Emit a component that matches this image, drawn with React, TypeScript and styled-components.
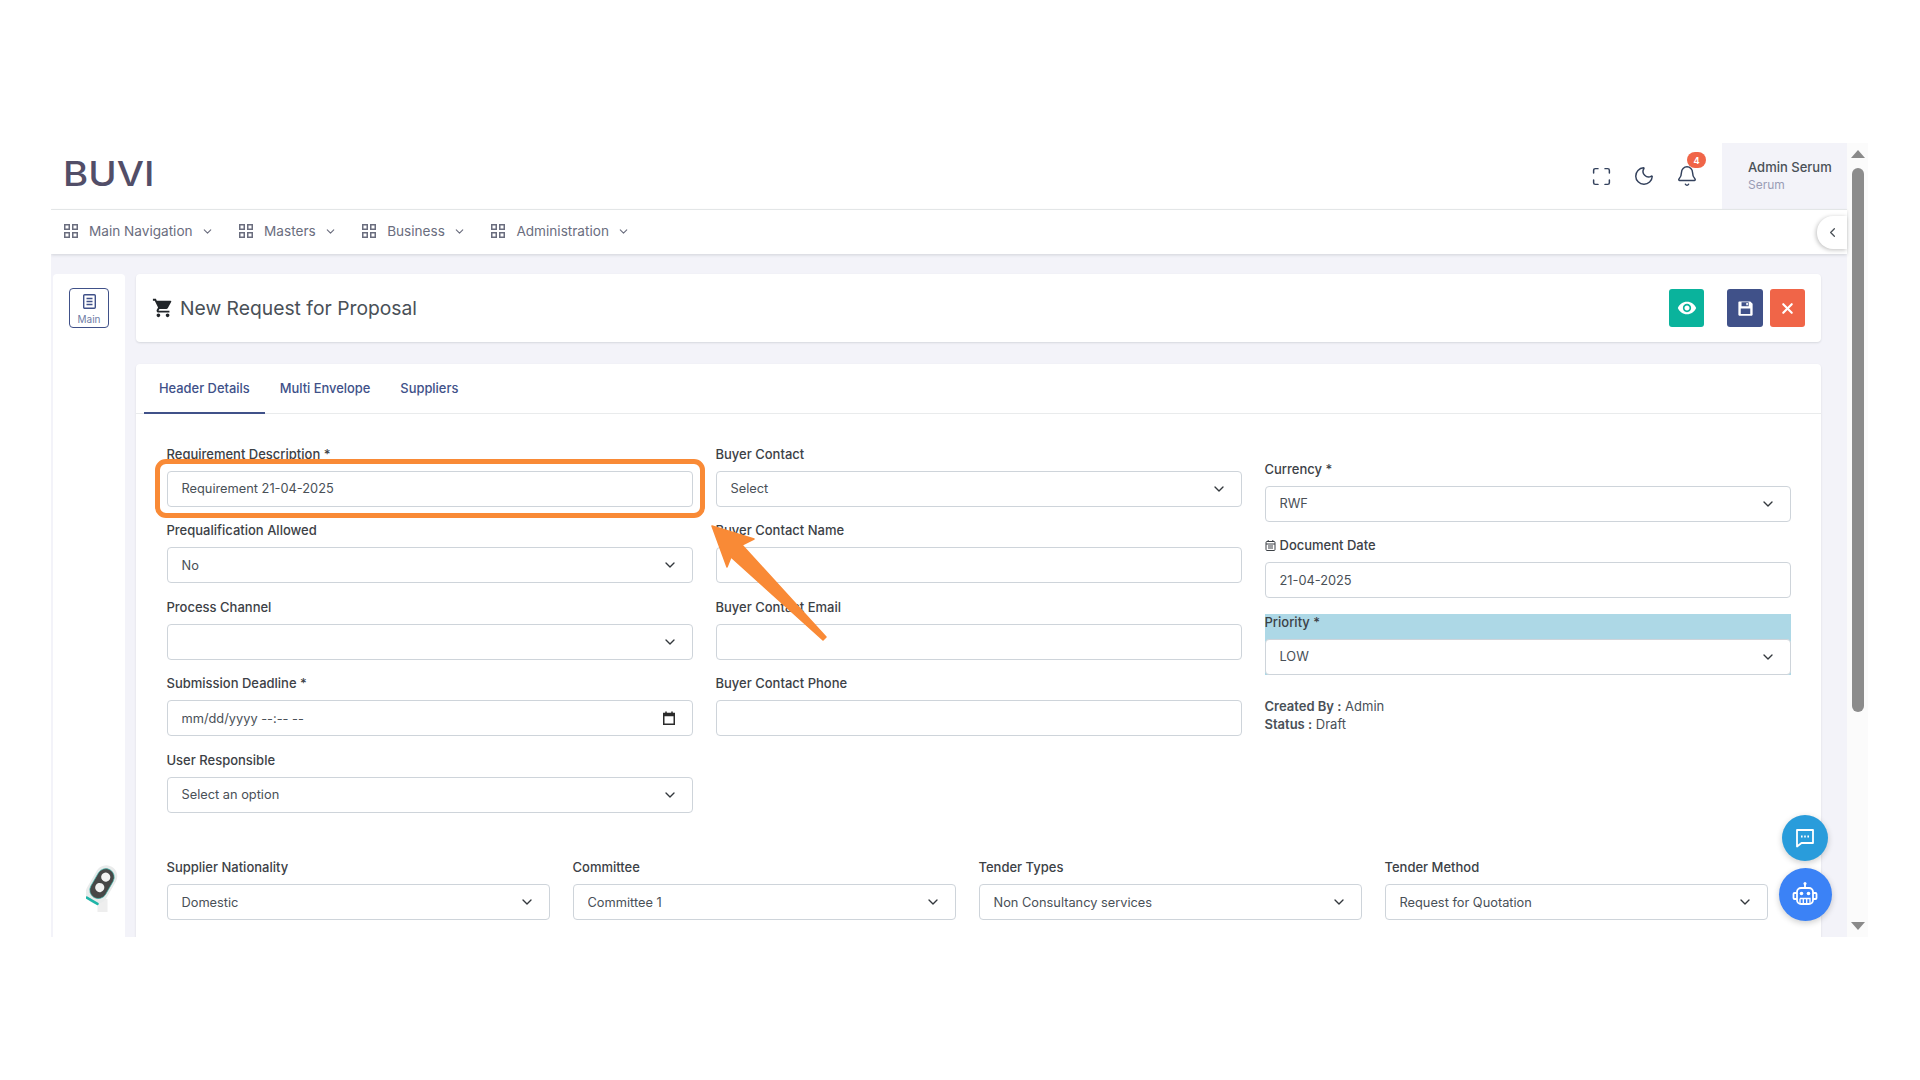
import React from 'react'
import styled, { createGlobalStyle } from 'styled-components'
import { Bell, ChevronDown, ChevronLeft, Maximize, Moon, X } from 'lucide-react'
import { MdShoppingCart, MdVisibility } from 'react-icons/md'
import { RiSave3Fill } from 'react-icons/ri'

const GlobalStyle = createGlobalStyle`
  html, body {
    margin: 0;
    background: #fff;
    font-family: Inter, "Noto Sans", sans-serif;
    color: #495057;
  }
  * { box-sizing: border-box; }
`

const Stage = styled.div`
  width: 1920px;
  height: 1080px;
  padding: 143px 52px 143px 51px;
  overflow: hidden;
`

const Frame = styled.div`
  position: relative;
  display: flex;
  width: 1817px;
  height: 794px;
  overflow: hidden;
`

const MainColumn = styled.div`
  flex: 1;
  min-width: 0;
  display: flex;
  flex-direction: column;
  background: #f3f3f9;
`

const Header = styled.header`
  height: 67px;
  flex: none;
  display: flex;
  align-items: center;
  background: #fff;
  border-bottom: 1px solid #e9ebec;
  padding-left: 12px;
`

const Logo = styled.div`
  font-size: 34px;
  font-weight: 500;
  color: #524e68;
  line-height: 1;
  margin-top: -4px;
  transform: scaleX(1.13);
  transform-origin: left center;
`

const HeaderIcons = styled.div`
  margin-left: auto;
  display: flex;
  align-items: center;
  gap: 21px;
  padding-right: 24px;
  color: #33415c;
`

const BellWrap = styled.div`
  position: relative;
  display: flex;
`

const Badge = styled.span`
  position: absolute;
  top: -13px;
  left: 11px;
  width: 19px;
  height: 16px;
  border-radius: 8px;
  background: #f06548;
  color: #fff;
  font-size: 9px;
  font-weight: 700;
  display: flex;
  align-items: center;
  justify-content: center;
`

const Profile = styled.div`
  width: 125px;
  height: 100%;
  background: #f3f3f9;
  padding: 15px 0 0 26px;
`

const ProfileName = styled.div`
  font-size: 13px;
  font-weight: 500;
  line-height: 18px;
  color: #495057;
  white-space: nowrap;
`

const ProfileRole = styled.div`
  font-size: 12px;
  line-height: 18px;
  color: #9a9db5;
`

const NavBar = styled.nav`
  position: relative;
  height: 44px;
  flex: none;
  display: flex;
  align-items: center;
  gap: 25.5px;
  padding: 0 0 2px 13px;
  background: #fff;
  box-shadow: 0 1px 3px rgba(56, 65, 74, 0.18);
`

const NavItem = styled.div`
  display: flex;
  align-items: center;
  color: #6a6d7e;
  font-size: 13.6px;
  white-space: nowrap;

  span {
    margin: 0 8px 0 11px;
  }
`

const CollapseTab = styled.div`
  position: absolute;
  top: 6px;
  right: 0;
  width: 30px;
  height: 33px;
  background: #fff;
  border-radius: 16px 0 0 16px;
  box-shadow: -1px 1px 4px rgba(0, 0, 0, 0.25);
  display: flex;
  align-items: center;
  justify-content: center;
  color: #495057;
`

const Body = styled.div`
  flex: 1;
  min-height: 0;
  display: flex;
  gap: 11px;
  padding: 20px 26px 0 2px;
  overflow: hidden;
`

const Sidebar = styled.aside`
  width: 72px;
  flex: none;
  background: #fff;
  border-radius: 4px 4px 0 0;
  display: flex;
  flex-direction: column;
  align-items: center;
  padding: 14px 0 25px;
`

const SideButton = styled.div`
  width: 40px;
  height: 40px;
  border: 1px solid #405189;
  border-radius: 4px;
  color: #6f7ca6;
  display: flex;
  flex-direction: column;
  align-items: center;
  padding-top: 5px;
  font-size: 10px;
  line-height: 12px;
  gap: 4px;

  svg {
    color: #405189;
  }
`

const Keyfob = styled.svg`
  margin-top: auto;
  align-self: flex-start;
  margin-left: 33px;
`

const Content = styled.main`
  flex: 1;
  min-width: 0;
`

const TitleCard = styled.section`
  height: 68px;
  display: flex;
  align-items: center;
  padding: 0 16px;
  margin-bottom: 22px;
  background: #fff;
  border-radius: 4px;
  box-shadow: 0 1px 2px rgba(56, 65, 74, 0.15);
`

const Title = styled.h1`
  margin: 0 0 0 6px;
  font-size: 19.3px;
  font-weight: 400;
  color: #495057;
`

const Actions = styled.div`
  margin-left: auto;
  display: flex;
`

const ActionButton = styled.div<{ $bg: string; $gap?: number; $width?: number }>`
  width: ${p => p.$width ?? 35}px;
  height: 38px;
  margin-left: ${p => p.$gap ?? 0}px;
  border-radius: 3px;
  background: ${p => p.$bg};
  color: #fff;
  display: flex;
  align-items: center;
  justify-content: center;
`

const FormCard = styled.section`
  background: #fff;
  border-radius: 4px;
  box-shadow: 0 1px 2px rgba(56, 65, 74, 0.15);
`

const Tabs = styled.div`
  height: 50px;
  padding-left: 8px;
  display: flex;
  border-bottom: 1px solid #e9ebec;
`

const Tab = styled.div<{ $active?: boolean }>`
  height: 50px;
  padding: 0 15px;
  display: flex;
  align-items: center;
  font-size: 12.9px;
  font-weight: 500;
  color: #405189;
  border-bottom: 2px solid ${p => (p.$active ? '#405189' : 'transparent')};
`

const FormBody = styled.div`
  padding: 31.5px 0 40px 30.5px;
`

const TopGrid = styled.div`
  display: grid;
  grid-template-columns: 526.5px 526.5px 526px;
  column-gap: 22.5px;
`

const Column = styled.div<{ $offset?: number }>`
  padding-top: ${p => p.$offset ?? 0}px;
`

const Field = styled.div<{ $bg?: string }>`
  margin-bottom: 15.5px;
  background: ${p => p.$bg ?? 'transparent'};
`

const Label = styled.label`
  display: flex;
  align-items: center;
  gap: 4px;
  height: 16px;
  margin-bottom: 9px;
  font-size: 13px;
  font-weight: 500;
  line-height: 16px;
  color: #3c4146;
  white-space: nowrap;
`

const Input = styled.input`
  display: block;
  width: 100%;
  height: 36px;
  padding: 0 14px;
  border: 1px solid #ced4da;
  border-radius: 4px;
  background: #fff;
  font-family: inherit;
  font-size: 12.8px;
  color: #495057;
  outline: none;
`

const ControlWrap = styled.div`
  position: relative;
  color: #33383d;

  svg {
    position: absolute;
    top: 10px;
    right: 15px;
    pointer-events: none;
  }
`

const Select = styled.select`
  display: block;
  width: 100%;
  height: 36px;
  padding: 0 14px;
  appearance: none;
  border: 1px solid #ced4da;
  border-radius: 4px;
  background: #fff;
  font-family: inherit;
  font-size: 12.8px;
  color: #495057;
  outline: none;
`

const Meta = styled.div`
  margin-top: 22px;
  font-size: 13px;
  line-height: 18px;
  color: #495057;

  b {
    font-weight: 600;
  }
`

const BottomRow = styled.div`
  margin-top: 31px;
  display: grid;
  grid-template-columns: repeat(4, 383px);
  column-gap: 23px;
`

const ScrollTrack = styled.div`
  width: 21px;
  flex: none;
  display: flex;
  flex-direction: column;
  align-items: center;
  padding: 7px 0;
  background: #fbfbfb;
`

const ArrowUp = styled.div`
  width: 0;
  height: 0;
  border-left: 7px solid transparent;
  border-right: 7px solid transparent;
  border-bottom: 8px solid #8a8a8a;
`

const ArrowDown = styled.div`
  margin-top: auto;
  width: 0;
  height: 0;
  border-left: 7px solid transparent;
  border-right: 7px solid transparent;
  border-top: 8px solid #8a8a8a;
`

const Thumb = styled.div`
  margin-top: 10px;
  width: 12px;
  height: 544px;
  border-radius: 6px;
  background: #8c8c8c;
`

const Fab = styled.div<{ $size: number; $bg: string; $top: number }>`
  position: absolute;
  top: ${p => p.$top}px;
  left: ${p => 1754 - p.$size / 2}px;
  width: ${p => p.$size}px;
  height: ${p => p.$size}px;
  border-radius: 50%;
  background: ${p => p.$bg};
  color: #fff;
  display: flex;
  align-items: center;
  justify-content: center;
  box-shadow: 0 2px 6px rgba(0, 0, 0, 0.2);
`

const Highlight = styled.div`
  position: absolute;
  left: 104px;
  top: 316px;
  width: 550px;
  height: 59px;
  border: 5px solid #f98a36;
  border-radius: 11px;
  pointer-events: none;
`

const ArrowOverlay = styled.svg`
  position: absolute;
  left: 650px;
  top: 375px;
  pointer-events: none;
`

const frameLeft = 650 + 51
const frameTop = 375 + 143
const arrowPoints = [
  [712, 526],
  [754, 539],
  [742, 545],
  [826, 637],
  [823, 640],
  [731, 557],
  [727, 567],
]
  .map(([x, y]) => `${x - frameLeft},${y - frameTop}`)
  .join(' ')

const navItems = ['Main Navigation', 'Masters', 'Business', 'Administration']

const GridIcon = () => (
  <svg width="14" height="14" viewBox="0 0 14 14" fill="none" stroke="currentColor" strokeWidth="1.5">
    <rect x="0.75" y="0.75" width="4.5" height="4.5" />
    <rect x="8.75" y="0.75" width="4.5" height="4.5" />
    <rect x="0.75" y="8.75" width="4.5" height="4.5" />
    <rect x="8.75" y="8.75" width="4.5" height="4.5" />
  </svg>
)

const DocIcon = () => (
  <svg width="15" height="15" viewBox="0 0 15 15" fill="none" stroke="currentColor" strokeWidth="1.4">
    <rect x="1.7" y="0.7" width="11.6" height="13.6" rx="1" />
    <path d="M4.5 4.5h6M4.5 7.5h6M4.5 10.5h6" />
  </svg>
)

const SmallCalendar = () => (
  <svg width="11" height="11" viewBox="0 0 11 11" fill="none" stroke="currentColor" strokeWidth="1">
    <rect x="1" y="1.5" width="9" height="9" rx="1" />
    <path d="M1 4h9M3 6h5M3 8h5" />
    <path d="M3.2 0v2M7.8 0v2" />
  </svg>
)

const PickerIcon = () => (
  <svg width="12" height="14" viewBox="0 0 12 14" style={{ top: 11, right: 18 }} fill="none" stroke="#2b2b2b">
    <rect x="0.75" y="2.5" width="10.5" height="10.75" strokeWidth="1.5" />
    <path d="M0.75 4h10.5" strokeWidth="2.5" />
    <path d="M3 0.5v2.5M9 0.5v2.5" strokeWidth="1.5" />
  </svg>
)

const ChatIcon = () => (
  <svg width="20" height="20" viewBox="0 0 20 20" fill="none">
    <path d="M2 2h16v13H6.5L2 18.5z" stroke="#fff" strokeWidth="1.8" strokeLinejoin="round" />
    <path d="M6 8.5h1.6M9.2 8.5h1.6M12.4 8.5H14" stroke="#fff" strokeWidth="1.8" />
  </svg>
)

const RobotIcon = () => (
  <svg width="28" height="28" viewBox="0 0 28 28" fill="none" stroke="#fff" strokeWidth="1.8">
    <circle cx="14" cy="2.5" r="1.5" fill="#fff" stroke="none" />
    <path d="M14 3v4" />
    <rect x="6" y="7" width="16" height="16" rx="4" />
    <path d="M6 12H3.5a1 1 0 0 0-1 1v4a1 1 0 0 0 1 1H6M22 12h2.5a1 1 0 0 1 1 1v4a1 1 0 0 1-1 1H22" />
    <circle cx="10.5" cy="12.5" r="1.8" fill="#fff" stroke="none" />
    <circle cx="17.5" cy="12.5" r="1.8" fill="#fff" stroke="none" />
    <path d="M9 17.5h10v5.5M9 17.5v5.5M12.3 17.5v5.5M15.7 17.5v5.5" strokeWidth="1.3" />
  </svg>
)

const TextField = ({ label, value = '' }: { label: string; value?: string }) => (
  <Field>
    <Label>{label}</Label>
    <Input type="text" readOnly value={value} />
  </Field>
)

const SelectField = ({ label, value = '', bg }: { label: string; value?: string; bg?: string }) => (
  <Field $bg={bg}>
    <Label>{label}</Label>
    <ControlWrap>
      <Select value={value} onChange={() => undefined}>
        <option value={value}>{value}</option>
      </Select>
      <ChevronDown size={16} strokeWidth={2} />
    </ControlWrap>
  </Field>
)

export default function App() {
  return (
    <>
      <GlobalStyle />
      <Stage>
        <Frame>
          <MainColumn>
            <Header>
              <Logo>BUVI</Logo>
              <HeaderIcons>
                <Maximize size={21} strokeWidth={1.7} />
                <Moon size={22} strokeWidth={1.6} />
                <BellWrap>
                  <Bell size={22} strokeWidth={1.6} />
                  <Badge>4</Badge>
                </BellWrap>
              </HeaderIcons>
              <Profile>
                <ProfileName>Admin Serum</ProfileName>
                <ProfileRole>Serum</ProfileRole>
              </Profile>
            </Header>
            <NavBar>
              {navItems.map(item => (
                <NavItem key={item}>
                  <GridIcon />
                  <span>{item}</span>
                  <ChevronDown size={13} strokeWidth={2} />
                </NavItem>
              ))}
              <CollapseTab>
                <ChevronLeft size={15} strokeWidth={2} />
              </CollapseTab>
            </NavBar>
            <Body>
              <Sidebar>
                <SideButton>
                  <DocIcon />
                  Main
                </SideButton>
                <Keyfob width="34" height="47" viewBox="0 0 34 47">
                  <rect x="11.5" y="34" width="10" height="13" fill="#eeeeee" />
                  <g transform="rotate(30 15.5 19.5)">
                    <rect x="4.5" y="-1" width="22" height="41" rx="11" fill="#e9ebeb" />
                    <rect x="7" y="2.5" width="17" height="32" rx="8.5" fill="#474747" stroke="#3db8ad" strokeWidth="0.6" />
                    <circle cx="15.5" cy="11" r="4.6" fill="#f2f2f2" />
                    <circle cx="15.5" cy="23" r="4.6" fill="#f2f2f2" />
                    <rect x="8" y="37" width="15" height="2.6" rx="1.3" fill="#1fb5a8" />
                  </g>
                </Keyfob>
              </Sidebar>
              <Content>
                <TitleCard>
                  <MdShoppingCart size={22} color="#212529" />
                  <Title>New Request for Proposal</Title>
                  <Actions>
                    <ActionButton $bg="#0ab39c">
                      <MdVisibility size={20} />
                    </ActionButton>
                    <ActionButton $bg="#405189" $gap={23} $width={36}>
                      <RiSave3Fill size={19} />
                    </ActionButton>
                    <ActionButton $bg="#f06548" $gap={7}>
                      <X size={17} strokeWidth={3} />
                    </ActionButton>
                  </Actions>
                </TitleCard>
                <FormCard>
                  <Tabs>
                    <Tab $active>Header Details</Tab>
                    <Tab>Multi Envelope</Tab>
                    <Tab>Suppliers</Tab>
                  </Tabs>
                  <FormBody>
                    <TopGrid>
                      <Column>
                        <TextField label="Requirement Description *" value="Requirement 21-04-2025" />
                        <SelectField label="Prequalification Allowed" value="No" />
                        <SelectField label="Process Channel" />
                        <Field>
                          <Label>Submission Deadline *</Label>
                          <ControlWrap>
                            <Input type="text" readOnly value="mm/dd/yyyy --:-- --" />
                            <PickerIcon />
                          </ControlWrap>
                        </Field>
                        <SelectField label="User Responsible" value="Select an option" />
                      </Column>
                      <Column>
                        <SelectField label="Buyer Contact" value="Select" />
                        <TextField label="Buyer Contact Name" />
                        <TextField label="Buyer Contact Email" />
                        <TextField label="Buyer Contact Phone" />
                      </Column>
                      <Column $offset={15}>
                        <SelectField label="Currency *" value="RWF" />
                        <Field>
                          <Label>
                            <SmallCalendar />
                            Document Date
                          </Label>
                          <Input type="text" readOnly value="21-04-2025" />
                        </Field>
                        <SelectField label="Priority *" value="LOW" bg="#add8e6" />
                        <Meta>
                          <div>
                            <b>Created By :</b> Admin
                          </div>
                          <div>
                            <b>Status :</b> Draft
                          </div>
                        </Meta>
                      </Column>
                    </TopGrid>
                    <BottomRow>
                      <SelectField label="Supplier Nationality" value="Domestic" />
                      <SelectField label="Committee" value="Committee 1" />
                      <SelectField label="Tender Types" value="Non Consultancy services" />
                      <SelectField label="Tender Method" value="Request for Quotation" />
                    </BottomRow>
                  </FormBody>
                </FormCard>
              </Content>
            </Body>
          </MainColumn>
          <ScrollTrack>
            <ArrowUp />
            <Thumb />
            <ArrowDown />
          </ScrollTrack>
          <Fab $size={46} $bg="#299cdb" $top={672}>
            <ChatIcon />
          </Fab>
          <Fab $size={53} $bg="#3b82f6" $top={725}>
            <RobotIcon />
          </Fab>
          <Highlight />
          <ArrowOverlay width="140" height="130" viewBox="0 0 140 130">
            <polygon
              points={arrowPoints}
              fill="#f98a36"
              stroke="#f98a36"
              strokeWidth="1.5"
              strokeLinejoin="round"
            />
          </ArrowOverlay>
        </Frame>
      </Stage>
    </>
  )
}
